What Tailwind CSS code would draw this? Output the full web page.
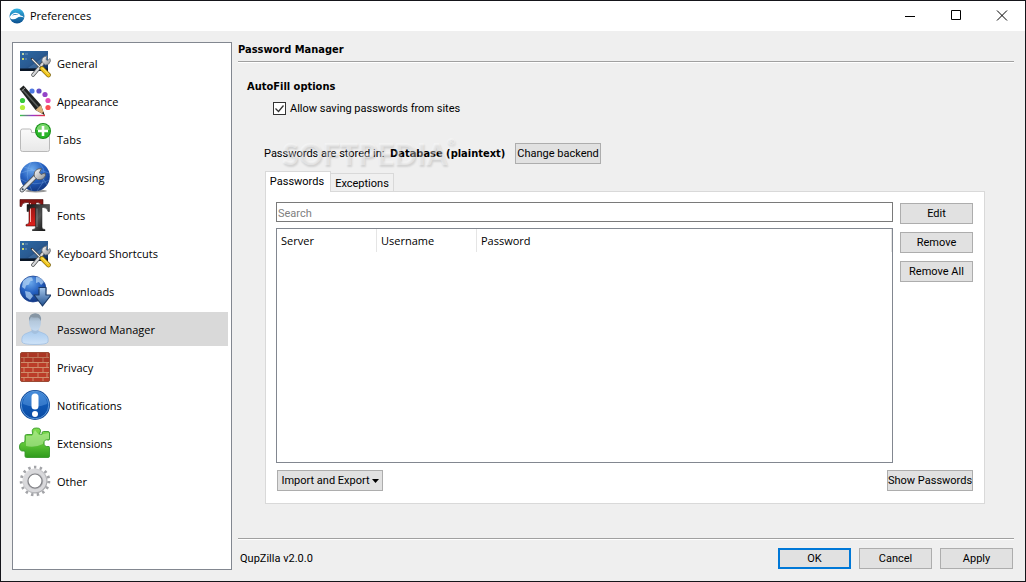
<!DOCTYPE html>
<html lang="en">
<head>
<meta charset="utf-8">
<meta name="viewport" content="width=device-width, initial-scale=1">
<title>Preferences</title>
<script src="https://cdn.jsdelivr.net/npm/@tailwindcss/browser@4"></script>
</head>
<body class="flex h-screen flex-col overflow-hidden border border-[#15151a] bg-[#efefef] font-['Roboto','Noto_Sans',sans-serif] text-[11px] text-black">

<svg class="absolute size-0" aria-hidden="true">
  <defs>
    <linearGradient id="screen" x1="0" y1="0" x2="1" y2="1"><stop offset="0" stop-color="#2b6aa5"/><stop offset=".5" stop-color="#2a5a91"/><stop offset="1" stop-color="#0e2850"/></linearGradient>
    <linearGradient id="steel" x1="0" y1="0" x2="1" y2="1"><stop offset="0" stop-color="#fff"/><stop offset="1" stop-color="#8a8d90"/></linearGradient>
    <radialGradient id="globe" cx=".4" cy=".25" r=".8"><stop offset="0" stop-color="#6aa8ec"/><stop offset=".5" stop-color="#2560c0"/><stop offset="1" stop-color="#10337c"/></radialGradient>
    <linearGradient id="leaf" x1="0" y1="0" x2="0" y2="1"><stop offset="0" stop-color="#7fdc50"/><stop offset=".55" stop-color="#5cc436"/><stop offset="1" stop-color="#2f9a1c"/></linearGradient>
    <linearGradient id="blueball" x1="0" y1="0" x2="0" y2="1"><stop offset="0" stop-color="#2f7bd2"/><stop offset=".5" stop-color="#0f58b4"/><stop offset="1" stop-color="#0a4aa3"/></linearGradient>
    <linearGradient id="arrow" x1="0" y1="0" x2="0" y2="1"><stop offset="0" stop-color="#a8c8ec"/><stop offset="1" stop-color="#1e4e8e"/></linearGradient>
    <linearGradient id="bust" x1="0" y1="0" x2="0" y2="1"><stop offset="0" stop-color="#a9cbee"/><stop offset="1" stop-color="#cfe3f8"/></linearGradient>
    <linearGradient id="face" x1="0" y1="0" x2="0" y2="1"><stop offset="0" stop-color="#8597a8"/><stop offset=".45" stop-color="#b4c8dc"/><stop offset="1" stop-color="#c5daf0"/></linearGradient>
    <linearGradient id="redT" x1="0" y1="0" x2="0" y2="1"><stop offset="0" stop-color="#7e1210"/><stop offset="1" stop-color="#e0201c"/></linearGradient>
    <linearGradient id="blackT" x1="0" y1="0" x2="1" y2="1"><stop offset="0" stop-color="#111"/><stop offset=".5" stop-color="#555"/><stop offset="1" stop-color="#000"/></linearGradient>
    <linearGradient id="gear" x1="0" y1="0" x2="1" y2="1"><stop offset="0" stop-color="#e4e4e6"/><stop offset="1" stop-color="#a2a3a7"/></linearGradient>
    <linearGradient id="folder" x1="0" y1="0" x2="0" y2="1"><stop offset="0" stop-color="#fafafa"/><stop offset="1" stop-color="#e8e8e8"/></linearGradient>
    <linearGradient id="logo" x1="0" y1="0" x2="0" y2="1"><stop offset="0" stop-color="#35b4e4"/><stop offset="1" stop-color="#0b4f8f"/></linearGradient>
    <linearGradient id="rainbow" gradientUnits="userSpaceOnUse" x1="1" y1="0" x2="26" y2="0"><stop offset="0" stop-color="#3c4"/><stop offset=".5" stop-color="#93c"/><stop offset="1" stop-color="#e33"/></linearGradient>
    <symbol id="i-desktop" viewBox="0 0 32 32">
      <path d="M1 4h28v20H1z" fill="url(#screen)"/><path d="M1 21.500h28V24H1z" fill="#0a1626"/>
      <path d="M9 21 29 7v8L18 21z" fill="#6c9ccc" opacity=".35"/>
      <path d="M3 6h2v2H3z" fill="#b8d2a8"/><path d="M3 11h2v2H3z" fill="#cdd870"/><path d="M6 7h3M6 12h2" stroke="#6d94bd"/>
      <path d="M14 28 25 15" stroke="#4c4e50" stroke-width="3.600" stroke-linecap="round"/><path d="M14 28 25 15" stroke="#d6d8da" stroke-width="2.200" stroke-linecap="round"/>
      <path d="M23.500 15.500a4 4 0 0 1 2.500-6l2-.5-1 3.500 1.500 1 2.500-2 .5 2.500q-1 4-5 4z" fill="url(#steel)" stroke="#66696c" stroke-width=".7"/>
      <path d="m13 12 10 10" stroke="#303234" stroke-width="2.400" stroke-linecap="round"/><path d="m13 12 10 10" stroke="#eee" stroke-width="1.200"/>
      <path d="m23 21.500 6.500 6.500" stroke="#7d6614" stroke-width="4.600" stroke-linecap="round"/><path d="m23 21.500 6.500 6.500" stroke="#f1c51c" stroke-width="3.400" stroke-linecap="round"/><path d="m23.500 21 6 6" stroke="#fff08c"/>
    </symbol>
    <symbol id="i-pencil" viewBox="0 0 32 32">
      <circle cx="13" cy="6" r="2.600" fill="#4d79e0"/><circle cx="20" cy="6" r="2.600" fill="#6450c4"/><circle cx="26" cy="9.500" r="2.600" fill="#9444c8"/><circle cx="29" cy="15.500" r="2.600" fill="#e44cb4"/><circle cx="29" cy="22.500" r="2.600" fill="#fa5050"/><circle cx="3.500" cy="15.500" r="2.600" fill="#38c83c"/><circle cx="3.500" cy="22.500" r="2.600" fill="#b4f03c"/>
      <path d="M1 30.500h25" stroke="url(#rainbow)" stroke-width="1.400"/>
      <path d="m.5 4 4-3.500L22 20l3.500 10-9-5z" fill="#202221"/><path d="m3.500 4.500 16 18" stroke="#5a5e5c" stroke-width="1.500"/>
      <path d="m16.500 25 5.500-5 3.500 10z" fill="#d8b078"/><path d="m23 28 1.500-1 1 3z" fill="#111"/><path d="m2.500 6 4-3.500" stroke="#999"/>
    </symbol>
    <symbol id="i-tab" viewBox="0 0 32 32">
      <path d="M1.500 8a2 2 0 0 1 2-2h7a2 2 0 0 1 2 2v1.500h16.500a1.500 1.500 0 0 1 1.500 1.500v15.500a2 2 0 0 1-2 2h-25a2 2 0 0 1-2-2z" fill="url(#folder)" stroke="#b9b9b9"/>
      <circle cx="24" cy="8" r="8" fill="#168f16"/><circle cx="24" cy="8" r="7" fill="#2bb52a"/><path d="M17.500 7a6.500 6 0 0 1 13 0z" fill="#7bd76e"/>
      <path d="M24 3v10M19 8h10" stroke="#fff" stroke-width="2.600"/>
    </symbol>
    <symbol id="i-globe" viewBox="0 0 32 32">
      <ellipse cx="17" cy="30" rx="11" ry="1.500" fill="#999"/>
      <circle cx="16" cy="15.500" r="14.800" fill="url(#globe)"/>
      <path d="M2 12q14-6 28 0M1.500 18q14 9 29 1M12 1Q4 14 13 30M20 1q12 13-2 29M5 6q16 3 23 18" fill="none" stroke="#8fc0f4" stroke-width=".6" opacity=".5"/>
      <path d="M3 29 18 14" stroke="#53585e" stroke-width="4.600" stroke-linecap="round"/><path d="M3 29 18 14" stroke="#dfe3e6" stroke-width="3" stroke-linecap="round"/>
      <path d="M15.500 16q-1.500-6 3.500-8l3.500-.5-2 4 1.500 2 4-1.500 .5 2.500q-2 5-8 4z" fill="url(#steel)" stroke="#555" stroke-width=".8"/><circle cx="3.700" cy="28.300" r="1" fill="#345"/>
    </symbol>
    <symbol id="i-fonts" viewBox="0 0 32 32">
      <path d="M1 .5h23v7h-1.500Q22 3.500 18 3.500h-1V23q0 2.500 3 2.500V27H7v-1.500q3 0 3-2.500V3.500H7Q3 3.500 2.500 7.500H1z" fill="url(#redT)" stroke="#480808" stroke-width=".6"/><path d="M11.500 4v19" stroke="#ffb0aa"/>
      <path d="M8 5.500h22.500v7H29q-.5-4-4.500-4H23V28q0 2.500 3 2.500V32H13.500v-1.500q3 0 3-2.500V8.500H14q-4 0-4.500 4H8z" fill="url(#blackT)" stroke="#222" stroke-width=".5"/><path d="M18 9.500V28" stroke="#888" stroke-width=".8"/>
    </symbol>
    <symbol id="i-download" viewBox="0 0 32 32">
      <circle cx="14" cy="14" r="13" fill="url(#globe)" stroke="#173e8c" stroke-width=".7"/>
      <path d="M4 6q5-5 9-3.500l1 3-3 1-1 3-3 1-1 3.500-3-2zM17 2q5 0 8 5l-3 3-2-3-3 1zM6 16l5 1 3 4-3 4-4-3zM19 13l5-1 1 3-4 2z" fill="#b9d8f6" opacity=".7"/>
      <path d="M20 12.500h7V20h5l-8.500 11L15 20h5z" fill="url(#arrow)" stroke="#1c3b68" stroke-width="1.200" stroke-linejoin="round"/>
    </symbol>
    <symbol id="i-person" viewBox="0 0 32 32">
      <path d="M3 29q-1-6 3-8l6-2.500h8l6 2.500q4 2 3 8-1 2.500-13 2.500T3 29z" fill="url(#bust)" stroke="#9fbfe2" stroke-width=".8"/>
      <path d="M12.500 15h7v4q-3.500 4-7 0z" fill="#a4c0de"/><path d="M10 8q0-7.500 6.500-7.500T22 8q0 6-2.500 8.500-3 2.500-6.500 0Q10 14 10 8z" fill="url(#face)"/><path d="M10 8Q9.500.5 16 .5T22 8q-1-3-3-3.500-5 0-7-.5-1 1-2 4z" fill="#8796a4"/>
    </symbol>
    <symbol id="i-brick" viewBox="0 0 32 32">
      <rect x="1.500" y="1.500" width="29" height="29" rx="1.500" fill="#bb3d29" stroke="#9a4a34"/>
      <path d="M2 6.500h28M2 11.500h28M2 16.500h28M2 21.500h28M2 26.500h28M9 2v4.500M19 2v4.500M28 2v4.500M5 6.500v5M14 6.500v5M24 6.500v5M9 11.500v5M19 11.500v5M28 11.500v5M5 16.500v5M14 16.500v5M24 16.500v5M9 21.500v5M19 21.500v5M28 21.500v5M5 26.500V30M14 26.500V30M24 26.500V30" stroke="#cf8e6c" stroke-width="1"/><path d="M2 2h28v9H2z" fill="#6c2016" opacity=".2"/>
    </symbol>
    <symbol id="i-notify" viewBox="0 0 32 32">
      <circle cx="16" cy="16" r="15" fill="#0b4596"/><circle cx="16" cy="16" r="13.800" fill="url(#blueball)" stroke="#6ea8e4" stroke-width=".8"/><path d="M4 15a12 12 0 0 1 24 0q-12 5-24 0z" fill="#6faaea" opacity=".4"/>
      <rect x="12.500" y="4.500" width="7" height="16" rx="3.500" fill="#fff"/><circle cx="16" cy="25" r="3" fill="#fff"/>
    </symbol>
    <symbol id="i-puzzle" viewBox="0 0 32 32">
      <path d="M6 13V9q0-1.500 1.500-1.500H13q1.500 0 .5-1.500Q12 1 17.500 1T21 6q-1 1.500.5 1.500h1.500V6q0-1.500 1.500-1.500H29q1.500 0 1.500 1.500v6q0 1.500-1.500 1-4-1-4 3t4 3.500q1.500-.5 1.500 1V29q0 1.500-1.500 1.500H7.500Q6 30.500 6 29v-4q0-1.500-1.500-1-4 .5-4-4t4-4.500Q6 16 6 13z" fill="url(#leaf)" stroke="#38992a" stroke-width=".9"/><path d="M7 9h6l3-6 4 5 10-2v6q-6 0-6 5-8 4-17 2z" fill="#d3f7bb" opacity=".45"/>
    </symbol>
    <symbol id="i-gear" viewBox="0 0 32 32">
      <circle cx="16" cy="16" r="13.800" fill="none" stroke="#a3a4a8" stroke-width="3" stroke-dasharray="2.400 3.380"/><circle cx="16" cy="16" r="9.700" fill="none" stroke="url(#gear)" stroke-width="5.600"/>
      <circle cx="16" cy="16" r="9.800" fill="none" stroke="#d9d9dc" stroke-width="3"/><circle cx="16" cy="16" r="7" fill="#fff" stroke="#808186" stroke-width="1.200"/>
    </symbol>
  </defs>
</svg>

<header class="flex h-[30px] shrink-0 items-center bg-white pl-2">
  <svg class="size-4 shrink-0" viewBox="0 0 16 16" aria-hidden="true"><circle cx="8" cy="8" r="7.500" fill="url(#logo)"/><path d="M1 8.500Q4 4 8 5q3 .5 3.500 2.500 2 0 3.500 2-4.500-1.500-7 .5t-6 1Q.8 10 1 8.500z" fill="#fff"/><path d="M3 7.500Q6 5 9.500 7q-3.500-.5-6.500.5z" fill="#1a77b9"/></svg>
  <h1 class="ml-[5px] grow font-['Open_Sans','Noto_Sans',sans-serif]">Preferences</h1>
  <button aria-label="Minimize" class="flex h-full w-[46px] items-center justify-center"><svg class="size-3" viewBox="0 0 12 12"><path d="M1 6.500h10" stroke="#000"/></svg></button>
  <button aria-label="Maximize" class="flex h-full w-[46px] items-center justify-center"><svg class="size-3" viewBox="0 0 12 12"><path d="M1.500 .5h9v9h-9z" fill="none" stroke="#000"/></svg></button>
  <button aria-label="Close" class="flex h-full w-[46px] items-center justify-center"><svg class="size-3" viewBox="0 0 12 12"><path d="m1 .5 10 10M11 .5 1 10.500" stroke="#000"/></svg></button>
</header>

<div class="flex min-h-0 grow px-[11px] py-[11px]">
  <nav aria-label="Preference sections" class="flex w-[220px] shrink-0 flex-col gap-1 border border-[#828790] bg-white p-[3px] font-['Open_Sans','Noto_Sans',sans-serif] [&>a]:flex [&>a]:h-[34px] [&>a]:shrink-0 [&>a]:items-center [&>a]:gap-[6px] [&>a]:pl-[3px] [&_span]:pt-[2px] [&_svg]:size-8">
    <a href="#general"><svg><use href="#i-desktop"/></svg><span>General</span></a>
    <a href="#appearance"><svg><use href="#i-pencil"/></svg><span>Appearance</span></a>
    <a href="#tabs"><svg><use href="#i-tab"/></svg><span>Tabs</span></a>
    <a href="#browsing"><svg><use href="#i-globe"/></svg><span>Browsing</span></a>
    <a href="#fonts"><svg><use href="#i-fonts"/></svg><span>Fonts</span></a>
    <a href="#shortcuts"><svg><use href="#i-desktop"/></svg><span>Keyboard Shortcuts</span></a>
    <a href="#downloads"><svg><use href="#i-download"/></svg><span>Downloads</span></a>
    <a href="#passwords" aria-current="page" class="bg-[#d9d9d9]"><svg><use href="#i-person"/></svg><span>Password Manager</span></a>
    <a href="#privacy"><svg><use href="#i-brick"/></svg><span>Privacy</span></a>
    <a href="#notifications"><svg><use href="#i-notify"/></svg><span>Notifications</span></a>
    <a href="#extensions"><svg><use href="#i-puzzle"/></svg><span>Extensions</span></a>
    <a href="#other"><svg><use href="#i-gear"/></svg><span>Other</span></a>
  </nav>

  <main class="ml-[6px] flex min-w-0 grow flex-col">
    <h2 class="h-5 shrink-0 border-b border-[#a0a0a0] font-['DejaVu_Sans_Condensed','DejaVu_Sans',sans-serif] font-bold leading-4 shadow-[0_1px_0_#fff]">Password Manager</h2>

    <section class="flex min-h-0 grow flex-col pt-4 pr-[29px] pl-[9px]">
      <h3 class="h-4 font-['DejaVu_Sans_Condensed','DejaVu_Sans',sans-serif] font-bold leading-[18px]">AutoFill options</h3>
      <label class="mt-[6px] flex h-4 items-center gap-1 self-start pl-[26px]">
        <span class="grid size-[13px] [&>*]:col-start-1 [&>*]:row-start-1">
          <input type="checkbox" checked class="peer size-[13px] appearance-none border border-[#333] bg-white">
          <svg class="pointer-events-none invisible size-[13px] peer-checked:visible" viewBox="0 0 13 13" aria-hidden="true"><path d="m2.500 6.500 3 3 5-6" fill="none" stroke="#333" stroke-width="1.300"/></svg>
        </span>
        <span class="pt-[2px]">Allow saving passwords from sites</span>
      </label>

      <div class="relative mt-[27px] flex h-[21px] items-center pl-[17px] whitespace-nowrap">
        <span class="w-[126px] pt-[2px]">Passwords are stored in:</span>
        <b class="w-[125px] pt-[2px] font-['DejaVu_Sans_Condensed','DejaVu_Sans',sans-serif]">Database (plaintext)</b>
        <button class="h-[21px] w-[86px] border border-[#adadad] bg-[#e1e1e1] pt-[2px]">Change backend</button>
        <div aria-hidden="true" class="pointer-events-none absolute -top-2 left-[35px] flex font-['Lato',sans-serif] text-[30px] leading-9 font-black text-white/35 [text-shadow:1px_2px_2px_rgb(0_0_0/0.12)]">SOFTPEDIA<span class="text-[10px] leading-3">®</span></div>
      </div>

      <div role="tablist" class="relative z-10 ml-[18px] mt-[7px] flex h-[21px] items-end">
        <button role="tab" aria-selected="true" class="h-[21px] w-[66px] border border-b-0 border-[#d9d9d9] bg-white pt-px pr-[2px]">Passwords</button>
        <button role="tab" aria-selected="false" class="mb-px h-[18px] w-[63px] border border-b-0 border-l-0 border-[#d9d9d9] bg-[#f0f0f0] pt-[2px]">Exceptions</button>
      </div>
      <div role="tabpanel" class="-mt-px mb-[34px] ml-[18px] flex min-h-0 grow flex-col border border-[#d9d9d9] bg-white px-[10px] pt-[10px] pb-3">
        <div class="flex min-h-0 grow gap-[7px] pr-px">
          <div class="flex min-w-0 grow flex-col gap-[6px]">
            <input type="search" aria-label="Search" placeholder="Search" class="h-5 w-full shrink-0 appearance-none border border-[#7a7a7a] bg-white px-px pt-[2px] placeholder:text-[#808080]">
            <div class="min-h-0 grow border border-[#828790] bg-white">
              <table class="w-full table-fixed border-separate border-spacing-0 text-left">
                <thead><tr class="h-[23px] [&>th]:border-r [&>th]:border-[#e5e5e5] [&>th]:p-0 [&>th]:pt-[2px] [&>th]:pl-1 [&>th]:font-['Open_Sans','Noto_Sans',sans-serif] [&>th]:font-normal"><th class="w-[100px]">Server</th><th class="w-[100px]">Username</th><th>Password</th></tr></thead>
                <tbody></tbody>
              </table>
            </div>
          </div>
          <div class="flex w-[73px] shrink-0 flex-col gap-2 pt-px [&>button]:h-[21px] [&>button]:border [&>button]:border-[#adadad] [&>button]:bg-[#e1e1e1] [&>button]:pt-[2px]">
            <button>Edit</button><button>Remove</button><button>Remove All</button>
          </div>
        </div>
        <div class="mt-[7px] flex h-[21px] shrink-0 justify-between px-px whitespace-nowrap">
          <button aria-haspopup="menu" class="flex w-[106px] items-center justify-center gap-[2px] border border-[#adadad] bg-[#e1e1e1]"><span class="pt-[2px]">Import and Export</span><svg class="h-1 w-[7px] shrink-0" viewBox="0 0 7 4"><path d="M0 0h7L3.500 4z"/></svg></button>
          <button class="w-[86px] border border-[#adadad] bg-[#e1e1e1] pt-[2px]">Show Passwords</button>
        </div>
      </div>
    </section>

    <footer class="flex h-8 shrink-0 items-end gap-2 border-t border-[#a0a0a0] pr-px pb-px shadow-[inset_0_1px_0_#fff] [&>button]:h-[21px] [&>button]:w-[73px] [&>button]:border [&>button]:border-[#adadad] [&>button]:bg-[#e1e1e1] [&>button]:pt-[2px]">
      <span class="grow pl-[2px] leading-5">QupZilla v2.0.0</span>
      <button class="outline outline-1 -outline-offset-2 outline-[#0078d7] !border-[#0078d7]">OK</button>
      <button>Cancel</button>
      <button>Apply</button>
    </footer>
  </main>
</div>
</body>
</html>
